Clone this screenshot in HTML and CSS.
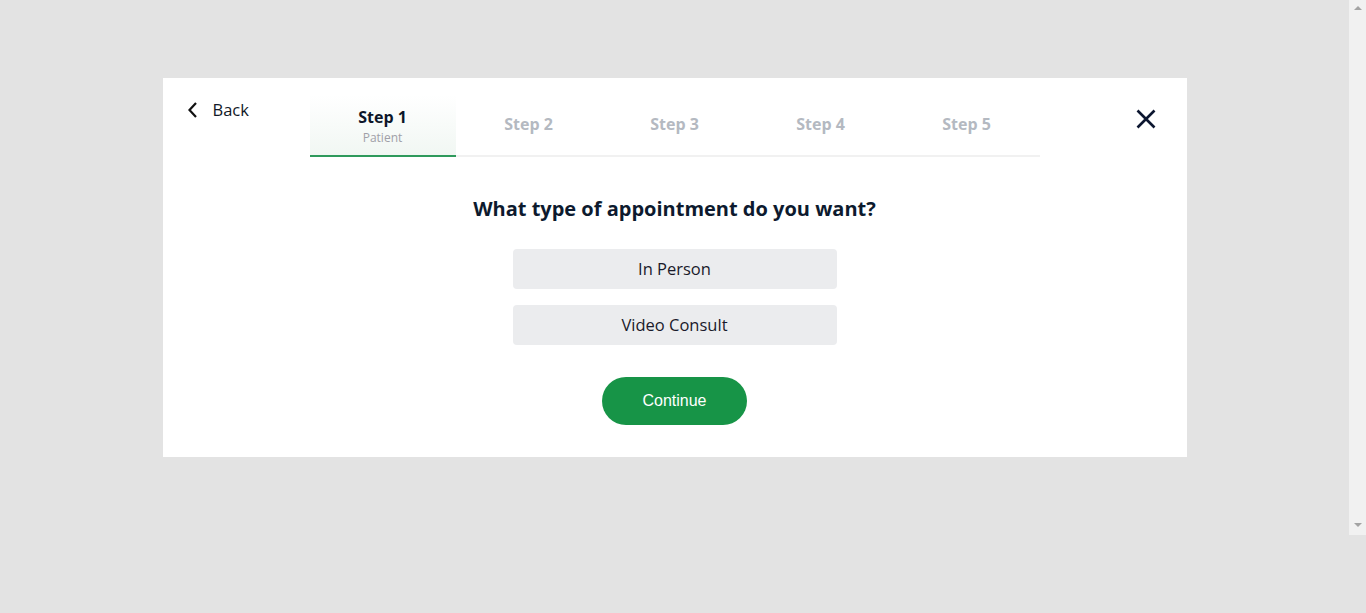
FILE: index.html
```html
<!DOCTYPE html>
<html lang="en">
<head>
<meta charset="utf-8">
<title>Book appointment</title>
<link rel="stylesheet" href="styles.css">
</head>
<body>
<div class="page">
  <main class="main">
    <section class="card">
      <header class="header">
        <div class="left">
          <a class="back" href="#">
            <svg class="chev" width="10" height="16" viewBox="0 0 10 16"><path d="M8 1 L1.5 8 L8 15" fill="none" stroke="#111" stroke-width="2.2"/></svg>
            <span>Back</span>
          </a>
        </div>
        <nav class="steps">
          <div class="step active"><span class="step-title">Step 1</span><span class="step-sub">Patient</span></div>
          <div class="step"><span class="step-title">Step 2</span></div>
          <div class="step"><span class="step-title">Step 3</span></div>
          <div class="step"><span class="step-title">Step 4</span></div>
          <div class="step"><span class="step-title">Step 5</span></div>
        </nav>
        <div class="right">
          <button class="close" aria-label="Close">
            <svg width="20" height="20" viewBox="0 0 20 20"><path d="M1.5 1.5 L18.5 18.5 M18.5 1.5 L1.5 18.5" stroke="#0c1630" stroke-width="2.6" fill="none"/></svg>
          </button>
        </div>
      </header>
      <div class="body">
        <h1 class="question">What type of appointment do you want?</h1>
        <div class="options">
          <button class="option">In Person</button>
          <button class="option">Video Consult</button>
        </div>
        <button class="continue">Continue</button>
      </div>
    </section>
  </main>
  <div class="scrollbar">
    <span class="arrow up"></span>
    <span class="arrow down"></span>
  </div>
</div>
</body>
</html>
```

FILE: styles.css
```css
* { box-sizing: border-box; }
html, body { margin: 0; padding: 0; }
body {
  background: #e3e3e3;
  font-family: "Open Sans", "Liberation Sans", sans-serif;
  height: 613px;
  overflow: hidden;
}
.page { display: flex; align-items: flex-start; }
.main { flex: 1; display: flex; justify-content: center; padding-top: 78px; }
.card {
  width: 1024px;
  background: #fff;
  padding-top: 17px;
  padding-bottom: 32px;
}
.header {
  display: grid;
  grid-template-columns: 147px 730px 147px;
  align-items: start;
}
.left { padding-left: 24px; padding-top: 3px; }
.back {
  display: flex;
  align-items: center;
  gap: 15px;
  text-decoration: none;
  color: #111827;
  font-size: 16.5px;
  line-height: 24px;
}
.chev { display: block; margin-left: 1px; }
.steps {
  display: flex;
  border-bottom: 2px solid #f1f1f1;
}
.step {
  width: 146px;
  height: 62px;
  display: flex;
  flex-direction: column;
  align-items: center;
  justify-content: center;
  margin-bottom: -2px;
  border-bottom: 2px solid transparent;
  padding-bottom: 2px;
}
.step.active {
  background: linear-gradient(to bottom, #ffffff 0%, #f1f7f3 100%);
  border-bottom-color: #2f9a5c;
  padding-bottom: 0;
  padding-top: 2px;
}
.step-title {
  font-weight: 700;
  font-size: 16px;
  line-height: 22px;
  color: #b4b9c1;
}
.active .step-title { color: #0d1629; }
.step-sub {
  font-size: 12px;
  line-height: 16px;
  color: #a0a0a8;
  margin-top: 2px;
}
.right { display: flex; justify-content: flex-end; padding-right: 31px; padding-top: 14px; }
.close {
  border: 0;
  background: none;
  padding: 0;
  width: 20px;
  height: 20px;
  cursor: pointer;
}
.close svg { display: block; }
.body {
  display: flex;
  flex-direction: column;
  align-items: center;
}
.question {
  margin: 38px 0 0;
  font-size: 20px;
  line-height: 28px;
  font-weight: 700;
  color: #0d1a2e;
}
.options {
  margin-top: 26px;
  display: flex;
  flex-direction: column;
  gap: 16px;
}
.option {
  width: 324px;
  height: 40px;
  border: 0;
  border-radius: 4px;
  background: #ebecee;
  font-family: "Open Sans", "Liberation Sans", sans-serif;
  font-size: 16.5px;
  color: #1a1a2a;
  padding: 0 0 2px;
  cursor: pointer;
}
.continue {
  margin-top: 32px;
  width: 145px;
  height: 48px;
  border: 0;
  border-radius: 24px;
  background: #179447;
  color: #fff;
  font-family: "Liberation Sans", Arial, sans-serif;
  font-size: 16px;
  cursor: pointer;
}
.scrollbar {
  width: 17px;
  height: 535px;
  background: #f1f1f1;
  display: flex;
  flex-direction: column;
  justify-content: space-between;
  align-items: center;
  padding: 6px 0 8px;
}
.arrow { width: 0; height: 0; border-left: 4px solid transparent; border-right: 4px solid transparent; }
.arrow.up { border-bottom: 4px solid #a3a3a3; }
.arrow.down { border-top: 4px solid #a3a3a3; }
```
